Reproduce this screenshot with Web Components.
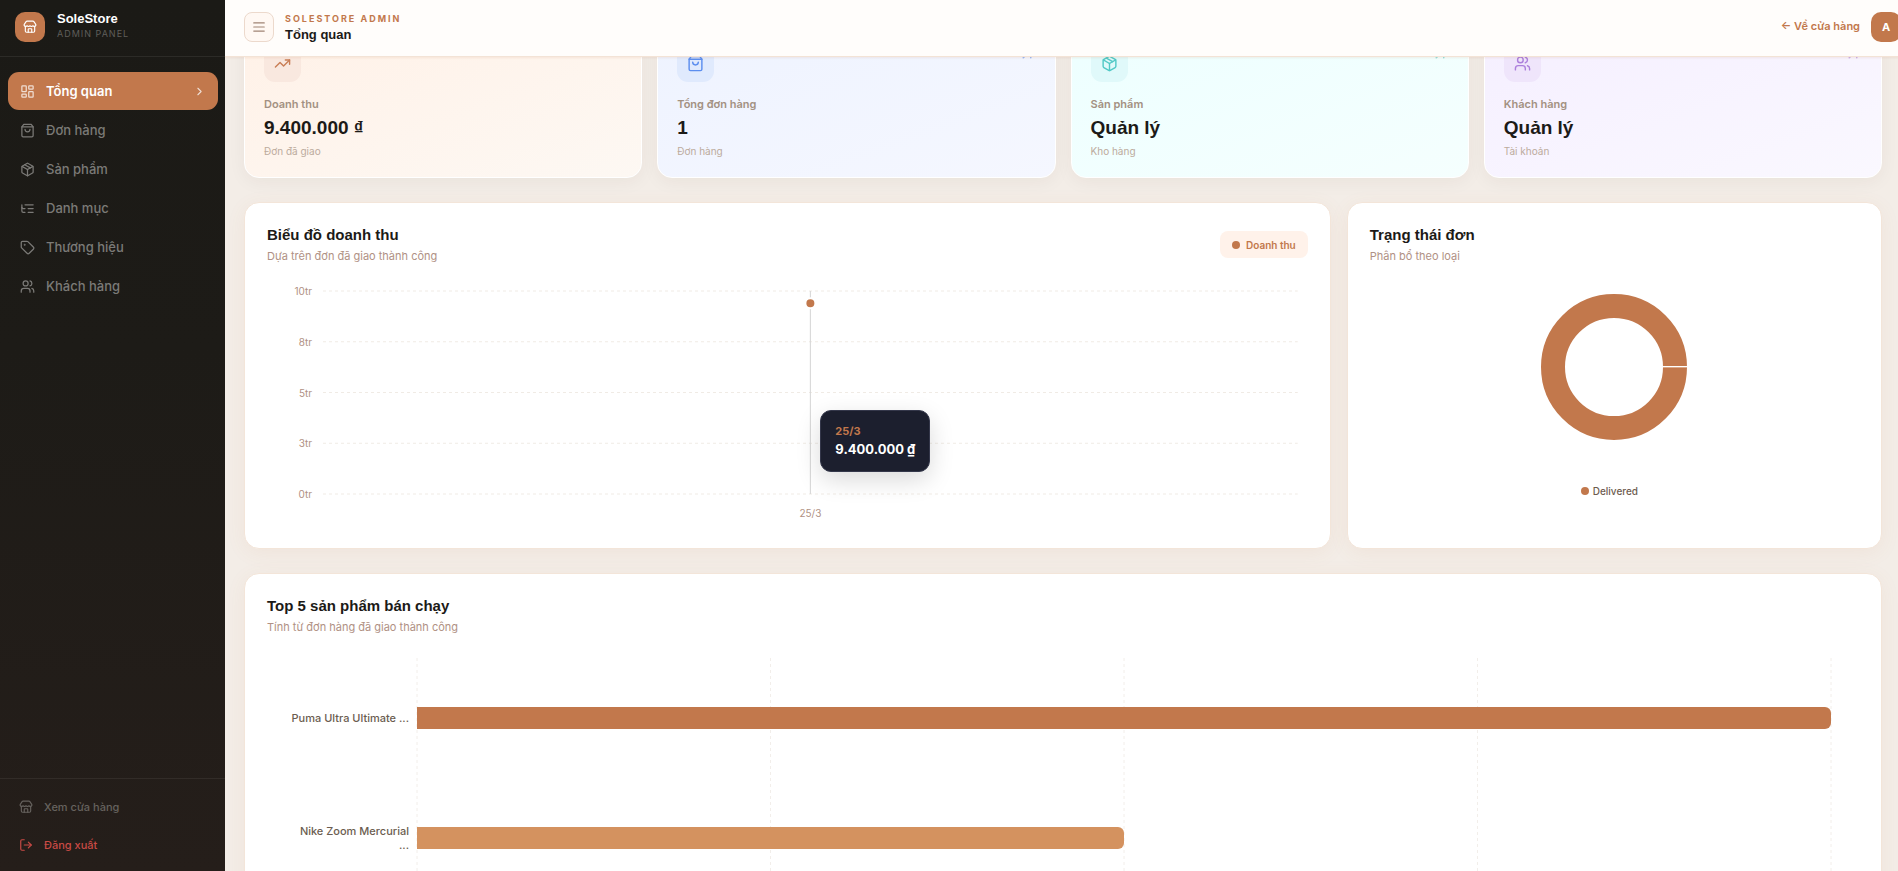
<!DOCTYPE html>
<html lang="vi">
<head>
<meta charset="utf-8">
<meta name="viewport" content="width=device-width, initial-scale=1">
<title>SoleStore Admin - Tổng quan</title>
<style>
  :root {
    --primary: #c2784c;
    --ink: #1c1a17;
    --muted: #b09184;
    --line: #f3e5d9;
    --heading: 'Liberation Sans', Arial, sans-serif;
  }
  body {
    margin: 0;
    font-family: Inter, 'Liberation Sans', sans-serif;
    font-size: 11px;
    line-height: 16px;
    color: var(--ink);
    background: #f3ede7;
  }
</style>
</head>
<body>
<admin-layout>
  <side-bar slot="sidebar">
    <nav-item icon="dashboard" active>Tổng quan</nav-item>
    <nav-item icon="bag">Đơn hàng</nav-item>
    <nav-item icon="box">Sản phẩm</nav-item>
    <nav-item icon="tree">Danh mục</nav-item>
    <nav-item icon="tag">Thương hiệu</nav-item>
    <nav-item icon="users">Khách hàng</nav-item>
    <nav-item slot="footer" icon="store" kind="small">Xem cửa hàng</nav-item>
    <nav-item slot="footer" icon="logout" kind="danger">Đăng xuất</nav-item>
  </side-bar>

  <top-bar slot="topbar" heading="Tổng quan"></top-bar>

  <card-row cols="four">
    <stat-card tone="orange" icon="trend" label="Doanh thu" value="9.400.000 ₫" note="Đơn đã giao"></stat-card>
    <stat-card tone="blue" icon="bag" label="Tổng đơn hàng" value="1" note="Đơn hàng" link></stat-card>
    <stat-card tone="teal" icon="box" label="Sản phẩm" value="Quản lý" note="Kho hàng" link></stat-card>
    <stat-card tone="purple" icon="users" label="Khách hàng" value="Quản lý" note="Tài khoản" link></stat-card>
  </card-row>

  <card-row cols="two">
    <panel-card heading="Biểu đồ doanh thu" sub="Dựa trên đơn đã giao thành công">
      <legend-badge slot="action">Doanh thu</legend-badge>
      <revenue-chart></revenue-chart>
    </panel-card>
    <panel-card heading="Trạng thái đơn" sub="Phân bổ theo loại">
      <status-donut label="Delivered"></status-donut>
    </panel-card>
  </card-row>

  <panel-card heading="Top 5 sản phẩm bán chạy" sub="Tính từ đơn hàng đã giao thành công">
    <top-products></top-products>
  </panel-card>
</admin-layout>

<script>
const ICONS = {
  dashboard: '<rect width="7" height="9" x="3" y="3" rx="1"/><rect width="7" height="5" x="14" y="3" rx="1"/><rect width="7" height="9" x="14" y="12" rx="1"/><rect width="7" height="5" x="3" y="16" rx="1"/>',
  bag: '<path d="M6 2 3 6v14a2 2 0 0 0 2 2h14a2 2 0 0 0 2-2V6l-3-4Z"/><path d="M3 6h18"/><path d="M16 10a4 4 0 0 1-8 0"/>',
  box: '<path d="M11 21.73a2 2 0 0 0 2 0l7-4A2 2 0 0 0 21 16V8a2 2 0 0 0-1-1.73l-7-4a2 2 0 0 0-2 0l-7 4A2 2 0 0 0 3 8v8a2 2 0 0 0 1 1.73z"/><path d="M12 22V12"/><path d="m3.3 7 8.7 5 8.7-5"/><path d="m7.5 4.27 9 5.15"/>',
  tree: '<path d="M21 12h-8"/><path d="M21 6H8"/><path d="M21 18h-8"/><path d="M3 6v4c0 1.1.9 2 2 2h3"/><path d="M3 10v6c0 1.1.9 2 2 2h3"/>',
  tag: '<path d="M12.586 2.586A2 2 0 0 0 11.172 2H4a2 2 0 0 0-2 2v7.172a2 2 0 0 0 .586 1.414l8.704 8.704a2.426 2.426 0 0 0 3.42 0l6.58-6.58a2.426 2.426 0 0 0 0-3.42z"/><circle cx="7.5" cy="7.5" r=".5" fill="currentColor"/>',
  users: '<path d="M16 21v-2a4 4 0 0 0-4-4H6a4 4 0 0 0-4 4v2"/><circle cx="9" cy="7" r="4"/><path d="M22 21v-2a4 4 0 0 0-3-3.87"/><path d="M16 3.13a4 4 0 0 1 0 7.75"/>',
  store: '<path d="M15 21v-5a1 1 0 0 0-1-1h-4a1 1 0 0 0-1 1v5"/><path d="M17.774 10.31a1.12 1.12 0 0 0-1.549 0 2.5 2.5 0 0 1-3.451 0 1.12 1.12 0 0 0-1.548 0 2.5 2.5 0 0 1-3.452 0 1.12 1.12 0 0 0-1.549 0 2.5 2.5 0 0 1-3.77-3.248l2.889-4.184A2 2 0 0 1 7 2h10a2 2 0 0 1 1.653.873l2.895 4.192a2.5 2.5 0 0 1-3.774 3.244"/><path d="M4 10.95V19a2 2 0 0 0 2 2h12a2 2 0 0 0 2-2v-8.05"/>',
  logout: '<path d="M9 21H5a2 2 0 0 1-2-2V5a2 2 0 0 1 2-2h4"/><path d="m16 17 5-5-5-5"/><path d="M21 12H9"/>',
  trend: '<path d="M16 7h6v6"/><path d="m22 7-8.500 8.500-5-5L2 17"/>',
  arrow: '<path d="M7 7h10v10"/><path d="M7 17 17 7"/>',
  chevron: '<path d="m9 18 6-6-6-6"/>',
  menu: '<path d="M3 5h18"/><path d="M3 12h18"/><path d="M3 19h18"/>'
};

function icon(name, size, stroke = 2) {
  return `<svg width="${size}" height="${size}" viewBox="0 0 24 24" fill="none" stroke="currentColor"
    stroke-width="${stroke}" stroke-linecap="round" stroke-linejoin="round" aria-hidden="true">${ICONS[name]}</svg>`;
}

// Small base class: every component renders once into an open shadow root
class BaseElement extends HTMLElement {
  constructor() {
    super();
    this.attachShadow({ mode: 'open' });
  }

  connectedCallback() {
    const template = document.createElement('template');
    template.innerHTML = this.render();
    this.shadowRoot.replaceChildren(template.content.cloneNode(true));
  }

  attr(name) {
    return this.getAttribute(name) || '';
  }
}

class AdminLayout extends BaseElement {
  render() {
    return `
      <style>
        :host { display: grid; grid-template-columns: 225px minmax(0, 1fr); height: 100vh; }
        .column { display: flex; flex-direction: column; min-height: 0; overflow: hidden; }
        main {
          flex: 1;
          min-height: 0;
          display: flex;
          flex-direction: column;
          gap: 24px;
          padding: 20px 16px 20px 19px;
          overflow-y: auto;
          scrollbar-width: none;
        }
        ::slotted(*) { flex-shrink: 0; }
      </style>
      <slot name="sidebar"></slot>
      <div class="column">
        <slot name="topbar"></slot>
        <main><slot></slot></main>
      </div>
    `;
  }

  scrollContent(top) {
    this.shadowRoot.querySelector('main').scrollTop = top;
  }
}

class SideBar extends BaseElement {
  render() {
    return `
      <style>
        :host {
          display: flex;
          flex-direction: column;
          background: linear-gradient(180deg, #1b1a16 0%, #1d1b17 40%, #251e1a 100%);
        }
        .brand {
          display: flex;
          gap: 12px;
          padding: 12px 15px 14px;
          border-bottom: 1px solid #2c2b27;
        }
        .logo {
          display: grid;
          place-items: center;
          width: 30px;
          height: 30px;
          border-radius: 10px;
          color: #fff;
          background: var(--primary);
        }
        .name { font: bold 13px/14px var(--heading); color: #fff; }
        .sub { font-size: 9px; line-height: 16px; letter-spacing: 1px; color: #5f5e5a; }
        nav { flex: 1; display: flex; flex-direction: column; gap: 1px; padding: 15px 7px 15px 8px; }
        footer {
          display: flex;
          flex-direction: column;
          gap: 1px;
          padding: 9px 7px 8px 8px;
          border-top: 1px solid #322c28;
        }
      </style>
      <div class="brand">
        <div class="logo">${icon('store', 14)}</div>
        <div>
          <div class="name">SoleStore</div>
          <div class="sub">ADMIN PANEL</div>
        </div>
      </div>
      <nav><slot></slot></nav>
      <footer><slot name="footer"></slot></footer>
    `;
  }
}

class NavItem extends BaseElement {
  render() {
    const small = this.hasAttribute('kind');
    return `
      <style>
        :host { display: block; }
        a {
          display: flex;
          align-items: center;
          gap: 11px;
          height: 38px;
          padding: 0 12px;
          border-radius: 11px;
          font-size: 13px;
          font-weight: 500;
          color: #7b7a77;
          text-decoration: none;
        }
        .label { flex: 1; }
        svg { flex: none; }
        :host([active]) a { color: #fff; font-weight: 600; background: var(--primary); }
        :host([active]) svg { opacity: .75; }
        :host([kind]) a { height: 37px; padding: 0 11px; font-size: 11px; color: #66625e; }
        :host([kind="danger"]) a { color: #c94a45; }
      </style>
      <a href="#">
        ${icon(this.attr('icon'), small ? 14 : 15)}
        <span class="label"><slot></slot></span>
        ${this.hasAttribute('active') ? icon('chevron', 13) : ''}
      </a>
    `;
  }
}

class TopBar extends BaseElement {
  render() {
    return `
      <style>
        :host { display: block; flex: none; position: relative; z-index: 1; }
        header {
          display: flex;
          gap: 11px;
          width: calc(100% + 22px);
          box-sizing: border-box;
          padding: 12px 19px 13px;
          border-bottom: 1px solid #f3e3d6;
          background: #fffdfb;
          box-shadow: 0 1px 2px rgba(194, 120, 76, .12);
        }
        button {
          display: grid;
          place-items: center;
          width: 30px;
          height: 30px;
          padding: 0;
          border: 1px solid #ecd9cc;
          border-radius: 8px;
          color: #a08374;
          background: #fff8f3;
        }
        .titles { flex: 1; }
        .eyebrow { font-size: 9px; font-weight: 700; line-height: 14px; letter-spacing: 2px; color: var(--primary); }
        h1 { margin: 1px 0 0; font: bold 13px/16px var(--heading); }
        a {
          padding-top: 6px;
          font-weight: 600;
          color: var(--primary);
          text-decoration: none;
        }
        .avatar {
          display: grid;
          place-items: center;
          width: 30px;
          height: 30px;
          border-radius: 10px;
          font-weight: 700;
          color: #fff;
          background: var(--primary);
        }
      </style>
      <header>
        <button type="button" aria-label="Menu">${icon('menu', 14)}</button>
        <div class="titles">
          <div class="eyebrow">SOLESTORE ADMIN</div>
          <h1>${this.attr('heading')}</h1>
        </div>
        <a href="#">← Về cửa hàng</a>
        <div class="avatar">A</div>
      </header>
    `;
  }
}

class CardRow extends BaseElement {
  render() {
    return `
      <style>
        :host { display: grid; }
        :host([cols="four"]) { grid-template-columns: repeat(4, minmax(0, 1fr)); gap: 15px; }
        :host([cols="two"]) { grid-template-columns: minmax(0, 67fr) minmax(0, 33fr); gap: 16px; }
      </style>
      <slot></slot>
    `;
  }
}

class StatCard extends BaseElement {
  render() {
    return `
      <style>
        :host {
          display: block;
          padding: 19px;
          border: 1px solid #fff;
          border-radius: 15px;
          background: linear-gradient(160deg, var(--from), var(--to));
          box-shadow: 0 4px 18px rgba(60, 40, 20, .05);
        }
        :host([tone="orange"]) { --from: #fff1e7; --to: #fdf8f3; --tint: #f9e8df; --accent: #c97e56; }
        :host([tone="blue"]) { --from: #eef3ff; --to: #f5f7ff; --tint: #e0eafd; --accent: #5c8eef; }
        :host([tone="teal"]) { --from: #edffff; --to: #f5fffe; --tint: #e0f9fa; --accent: #52c9c6; }
        :host([tone="purple"]) { --from: #f5efff; --to: #faf8ff; --tint: #efe5fb; --accent: #ac7fdc; }
        .head { display: flex; justify-content: space-between; color: var(--accent); }
        .icon {
          display: grid;
          place-items: center;
          width: 37px;
          height: 37px;
          border-radius: 11px;
          background: var(--tint);
        }
        .label { margin-top: 14px; font-weight: 600; color: #a39182; }
        .value { margin: 4px 0; font: bold 19px/24px var(--heading); }
        .note { font-size: 10px; line-height: 14px; color: #bcab9d; }
        .go { opacity: .6; }
        .go svg { display: block; }
      </style>
      <div class="head">
        <div class="icon">${icon(this.attr('icon'), 17)}</div>
        ${this.hasAttribute('link') ? `<span class="go">${icon('arrow', 18)}</span>` : ''}
      </div>
      <div class="label">${this.attr('label')}</div>
      <div class="value">${this.attr('value')}</div>
      <div class="note">${this.attr('note')}</div>
    `;
  }
}

class PanelCard extends BaseElement {
  render() {
    return `
      <style>
        :host {
          display: block;
          padding: 22px;
          border: 1px solid var(--line);
          border-radius: 15px;
          background: #fff;
          box-shadow: 0 4px 20px rgba(194, 120, 76, .07);
        }
        .head { display: flex; align-items: center; justify-content: space-between; }
        h2 { margin: 0; font: bold 15px/20px var(--heading); }
        p { margin: 3px 0 0; color: var(--muted); }
      </style>
      <div class="head">
        <div>
          <h2>${this.attr('heading')}</h2>
          <p>${this.attr('sub')}</p>
        </div>
        <slot name="action"></slot>
      </div>
      <slot></slot>
    `;
  }
}

class LegendBadge extends BaseElement {
  render() {
    return `
      <style>
        :host {
          display: flex;
          align-items: center;
          gap: 6px;
          height: 27px;
          padding: 0 12px;
          border-radius: 8px;
          font-size: 10px;
          font-weight: 600;
          color: var(--primary);
          background: #fff2ea;
        }
        i { width: 8px; height: 8px; border-radius: 50%; background: currentColor; }
      </style>
      <i></i><slot></slot>
    `;
  }
}

class RevenueChart extends BaseElement {
  render() {
    const ticks = ['10tr', '8tr', '5tr', '3tr', '0tr'];
    const lines = ticks.map((t, i) =>
      `<line x1="0" x2="100%" y1="${i * 25}%" y2="${i * 25}%"/>`).join('');
    return `
      <style>
        :host {
          display: grid;
          grid-template-columns: 45px minmax(0, 1fr);
          column-gap: 11px;
          margin-top: 27px;
          padding: 0 10px 5px 0;
          font-size: 10px;
          color: var(--muted);
        }
        .ticks {
          display: flex;
          flex-direction: column;
          justify-content: space-between;
          margin: -8px 0;
          text-align: right;
        }
        .plot { position: relative; height: 203px; }
        svg { display: block; width: 100%; height: 100%; overflow: visible; }
        .grid { stroke: #f0ebe5; stroke-dasharray: 3 3; }
        .cursor { stroke: #d4d4d4; }
        .dot { fill: var(--primary); stroke: #fff; stroke-width: 2; }
        .tip {
          position: absolute;
          left: calc(50% + 10px);
          top: 119px;
          padding: 12px 14px;
          border: 1px solid #34374a;
          border-radius: 11px;
          white-space: nowrap;
          font-weight: 700;
          color: #fff;
          background: #1c1f2e;
          box-shadow: 0 8px 24px rgba(0, 0, 0, .15);
        }
        .date { font-size: 11px; line-height: 16px; color: var(--primary); }
        .sum { font-size: 13px; line-height: 20px; }
        .x { grid-column: 2; margin-top: 11px; text-align: center; }
      </style>
      <div class="ticks">${ticks.map(t => `<span>${t}</span>`).join('')}</div>
      <div class="plot">
        <svg>
          <g class="grid">${lines}</g>
          <line class="cursor" x1="50%" x2="50%" y1="0" y2="100%"/>
          <circle class="dot" cx="50%" cy="6%" r="5"/>
        </svg>
        <div class="tip">
          <div class="date">25/3</div>
          <div class="sum">9.400.000 ₫</div>
        </div>
      </div>
      <div class="x">25/3</div>
    `;
  }
}

class StatusDonut extends BaseElement {
  render() {
    return `
      <style>
        :host { display: flex; flex-direction: column; align-items: center; margin-top: 30px; }
        .legend {
          display: flex;
          align-items: center;
          gap: 4px;
          margin-top: 43px;
          padding-right: 10px;
          font-size: 10px;
          font-weight: 500;
          color: #6e5c4f;
        }
        i { width: 8px; height: 8px; border-radius: 50%; background: var(--primary); }
      </style>
      <svg width="146" height="146" viewBox="0 0 146 146">
        <circle cx="73" cy="73" r="61" fill="none" stroke="#c2784c" stroke-width="24"/>
        <path d="M122 72.500h24" stroke="#fff"/>
        <path d="M122 73.500h24" stroke="#dba98a"/>
      </svg>
      <div class="legend"><i></i>${this.attr('label')}</div>
    `;
  }
}

class TopProducts extends BaseElement {
  render() {
    const rows = [
      { name: 'Puma Ultra Ultimate ...', share: 100, color: '#c2784c' },
      { name: 'Nike Zoom Mercurial<br>...', share: 50, color: '#d4925f' }
    ];
    const lines = [0, 25, 50, 75, 100].map(x =>
      `<line x1="${x}%" x2="${x}%" y1="0" y2="100%"/>`).join('');
    return `
      <style>
        :host {
          display: grid;
          grid-template-columns: 142px minmax(0, 1fr);
          column-gap: 8px;
          margin-top: 23px;
          padding-right: 28px;
        }
        .names, .bars { display: grid; grid-auto-rows: 120px; align-items: center; }
        .names { text-align: right; font-weight: 500; line-height: 14px; color: #6b5d50; }
        .bars, svg { grid-area: 1 / 2; }
        svg { width: 100%; height: 100%; overflow: visible; stroke: #f2eeea; stroke-dasharray: 3 3; }
        .bar { height: 22px; border-radius: 0 6px 6px 0; }
      </style>
      <div class="names">${rows.map(r => `<div>${r.name}</div>`).join('')}</div>
      <svg aria-hidden="true">${lines}</svg>
      <div class="bars">
        ${rows.map(r => `<div class="bar" style="width:${r.share}%;background:${r.color}"></div>`).join('')}
      </div>
    `;
  }
}

// Define the custom elements
customElements.define('admin-layout', AdminLayout);
customElements.define('side-bar', SideBar);
customElements.define('nav-item', NavItem);
customElements.define('top-bar', TopBar);
customElements.define('card-row', CardRow);
customElements.define('stat-card', StatCard);
customElements.define('panel-card', PanelCard);
customElements.define('legend-badge', LegendBadge);
customElements.define('revenue-chart', RevenueChart);
customElements.define('status-donut', StatusDonut);
customElements.define('top-products', TopProducts);

document.querySelector('admin-layout').scrollContent(52);
</script>
</body>
</html>
